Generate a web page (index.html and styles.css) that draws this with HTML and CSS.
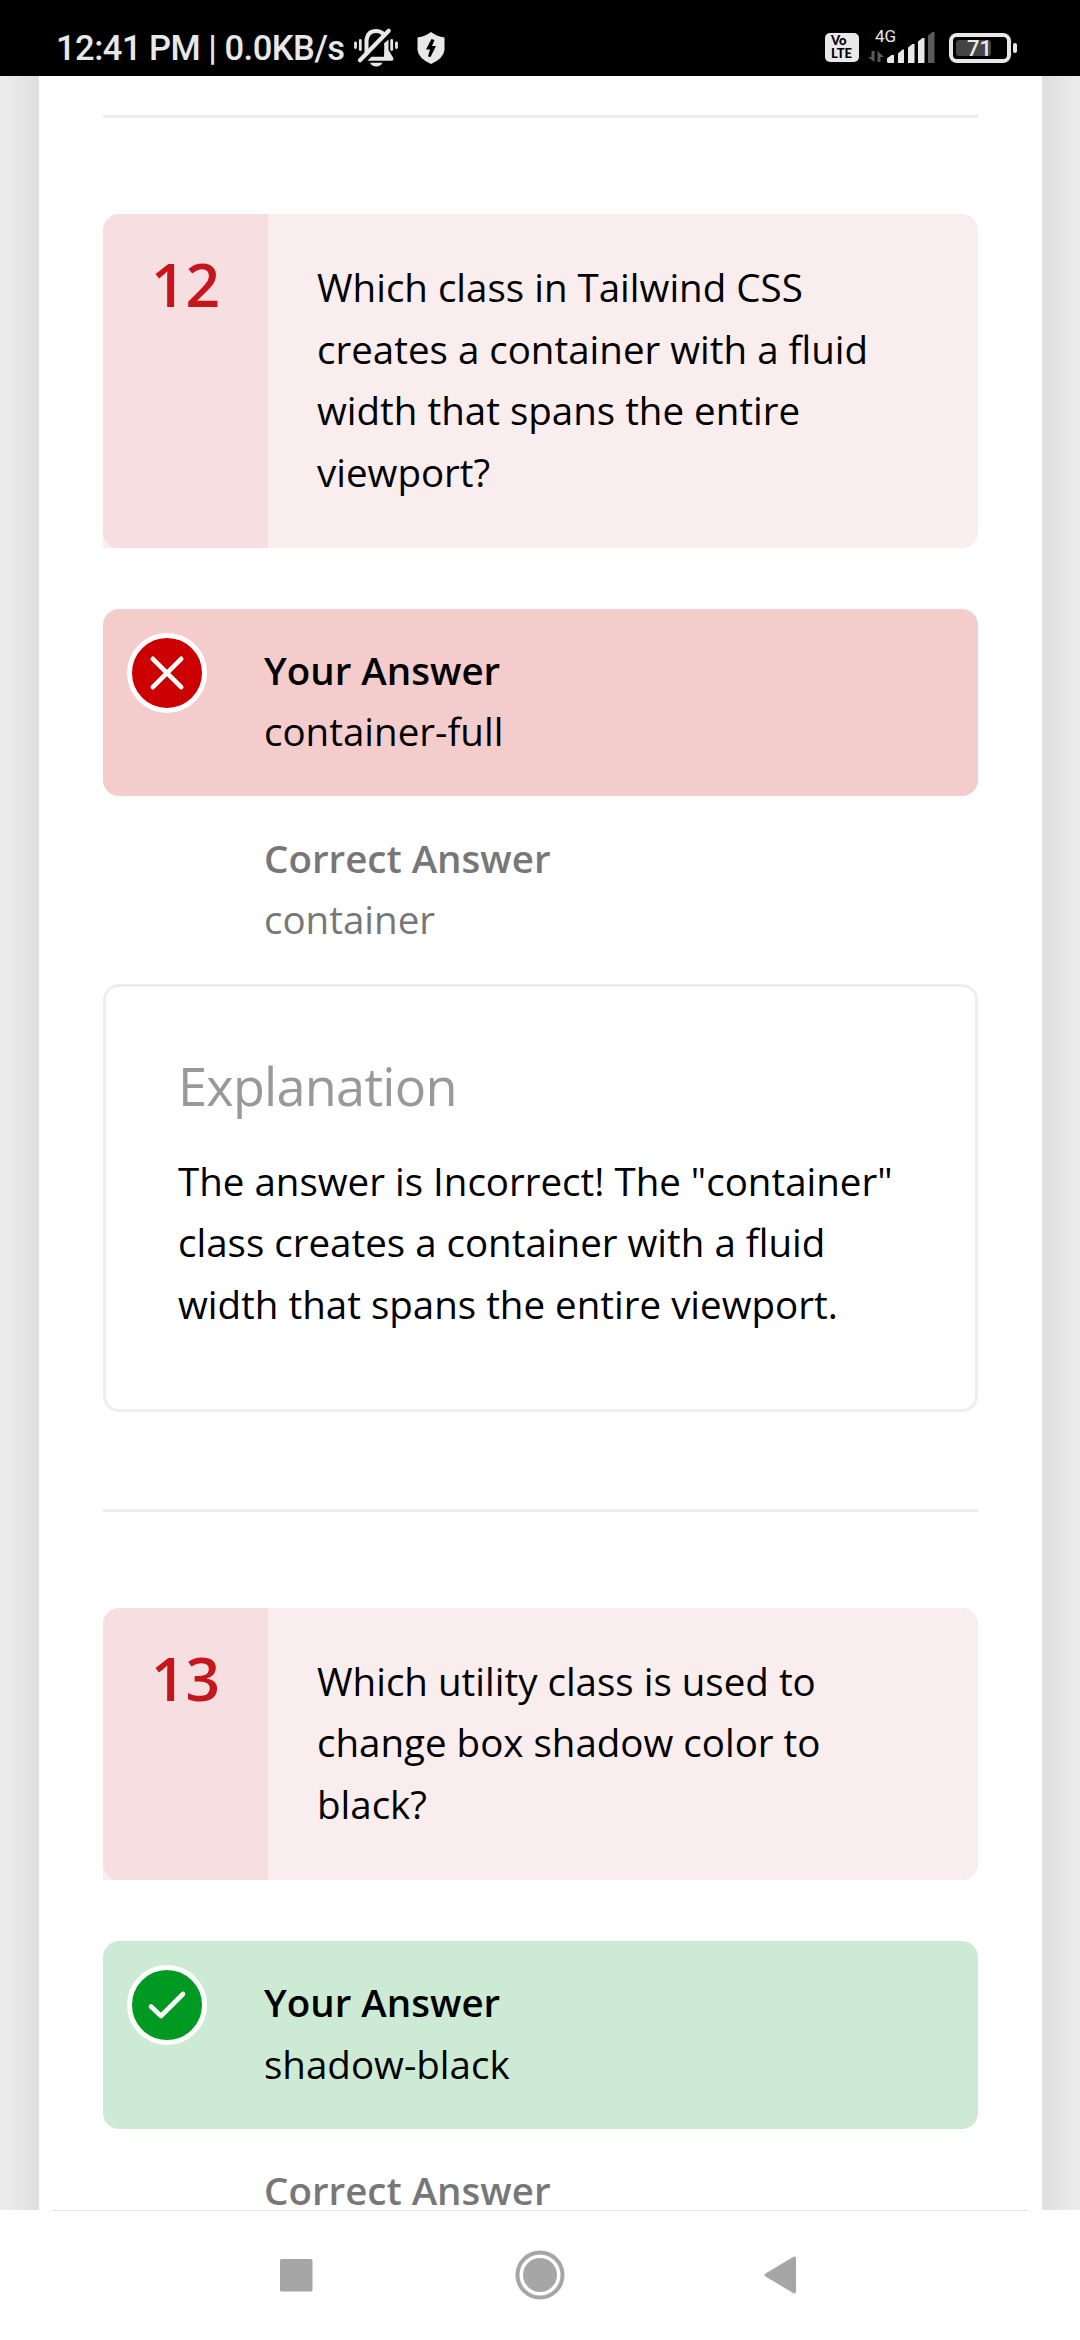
FILE: index.html
```html
<!DOCTYPE html>
<html lang="en">
<head>
<meta charset="utf-8">
<title>Quiz results</title>
<link rel="stylesheet" href="styles.css">
</head>
<body>
<header class="status">
  <span class="clock">12:41 PM | 0.0KB/s</span>
  <svg class="bell" width="46" height="42" viewBox="0 0 46 42" fill="none" stroke="#e8e8e8" stroke-width="4" stroke-linecap="butt">
    <path d="M13.500 27V13.500Q14.500 4 23 4Q27.500 4 30.500 7"/>
    <path d="M7 33.300L35.700 3.800" stroke-width="4.200" stroke-linecap="round"/>
    <path d="M14.500 33.700L18.500 29.700H31L31.300 19.500L31 16.500L35.500 12.500V23L40.300 31Q41 33.700 38.500 33.700Z" fill="#e8e8e8" stroke="none"/>
    <path d="M17 35.700H29.500Q27.500 39.500 23.300 39.500Q19 39.500 17 35.700Z" fill="#e8e8e8" stroke="none"/>
    <path d="M2.500 15.800V20.500M7.300 13.500V22.500M38.700 13.500V22.500M43.500 15.800V20.500" stroke-width="2.800" stroke-linecap="round"/>
  </svg>
  <svg class="shield" width="28" height="32" viewBox="0 0 28 32">
    <path d="M14 0Q20 4.500 27.500 5.500V18Q26.500 26.500 14 32Q1.500 26.500 .5 18V5.500Q8 4.500 14 0Z" fill="#e8e8e8"/>
    <path d="M14.500 7L9 17.500H13L11 24.500L13.500 25L19 14H15L17.500 8Z" fill="#000"/>
  </svg>
  <span class="spacer"></span>
  <span class="volte"><b>Vo</b><b>LTE</b></span>
  <span class="network">
    <span class="gen">4G</span>
    <svg width="68" height="33" viewBox="0 0 68 33">
      <path d="M6.500 20V31L0 26H3.500V20ZM9.500 31V20L16 26H12.500V31Z" fill="#5a5a5a"/>
      <g fill="#e8e8e8"><path d="M19 31V27.500L23.500 24H26V32H20ZM30 32V22.500L34.500 18.500H36V32ZM40 32V16.500L44.500 13H46.500V32ZM50 32V10.500L54.500 7H56.500V32Z"/></g>
      <path d="M60 32V4.500L64.500 1H66.500V32Z" fill="#5a5a5a"/>
    </svg>
  </span>
  <span class="battery"><span class="level">71</span></span>
  <span class="tip"></span>
</header>

<main class="viewport">
  <div class="sheet">
    <hr class="rule">
    <section class="item">
      <div class="question">
        <div class="number">12</div>
        <p class="prompt">Which class in Tailwind CSS<br>creates a container with a fluid<br>width that spans the entire<br>viewport?</p>
      </div>
      <div class="answer wrong">
        <svg class="mark" viewBox="0 0 80 80"><circle cx="40" cy="40" r="37.500"/><path d="M25.800 25.800L54.200 54.200M54.200 25.800L25.800 54.200"/></svg>
        <div><strong>Your Answer</strong><br>container-full</div>
      </div>
      <div class="answer expected">
        <div><strong>Correct Answer</strong><br>container</div>
      </div>
      <div class="explanation">
        <h3>Explanation</h3>
        <p>The answer is Incorrect! The "container"<br>class creates a container with a fluid<br>width that spans the entire viewport.</p>
      </div>
    </section>
    <hr class="rule">
    <section class="item">
      <div class="question">
        <div class="number">13</div>
        <p class="prompt">Which utility class is used to<br>change box shadow color to<br>black?</p>
      </div>
      <div class="answer right">
        <svg class="mark" viewBox="0 0 80 80"><circle cx="40" cy="40" r="37.500"/><path d="M24 41.500L34 51L56 29"/></svg>
        <div><strong>Your Answer</strong><br>shadow-black</div>
      </div>
      <div class="answer expected">
        <div><strong>Correct Answer</strong></div>
      </div>
    </section>
  </div>
</main>

<nav class="keys">
  <svg viewBox="0 0 50 50"><rect x="9" y="9" width="32.500" height="32.500" rx="1.500"/></svg>
  <svg viewBox="0 0 50 50"><circle cx="25" cy="25" r="22.500" fill="none" stroke="#a6a6a6" stroke-width="4"/><circle cx="25" cy="25" r="17"/></svg>
  <svg viewBox="0 0 50 50"><path d="M6.500 23.500L34.500 6.800Q37 5.800 37 8.500V41.500Q37 44.500 34.500 43.200L6.500 26.500Q4.500 25 6.500 23.500Z"/></svg>
</nav>
</body>
</html>
```

FILE: styles.css
```css
* { box-sizing: border-box; }

body {
  margin: 0;
  height: 2340px;
  display: flex;
  flex-direction: column;
  overflow: hidden;
  background: #fff;
  color: #000;
  font: 38.5px/61.6px "Open Sans", sans-serif;
}

p, h3 { margin: 0; font-weight: 400; }
strong { font-weight: 600; }

.status {
  flex: none;
  height: 76px;
  padding: 19px 63px 0 56px;
  display: flex;
  align-items: center;
  background: #000;
  color: #e8e8e8;
  font-family: Roboto, sans-serif;
}
.clock { width: 289px; font-size: 34.5px; font-weight: 500; line-height: 56px; letter-spacing: -.5px; white-space: nowrap; }
.bell { margin-left: 8px; }
.shield { margin-left: 18px; }
.spacer { flex: 1; }
.volte {
  width: 34px;
  height: 29px;
  padding: 1px 0 0 6px;
  border-radius: 5px;
  background: #e8e8e8;
  color: #000;
  font: 13px/13px Lato, sans-serif;
}
.volte b { display: block; height: 13px; font-weight: 900; }
.network { position: relative; width: 68px; margin-left: 9px; display: flex; }
.gen { position: absolute; left: 7px; top: -4px; font-size: 17px; line-height: 18px; }
.battery {
  width: 62px;
  height: 30px;
  margin-left: 13px;
  padding: 3px;
  border: 4px solid #e8e8e8;
  border-radius: 8px;
}
.level {
  display: block;
  width: 35px;
  height: 16px;
  padding-left: 11px;
  border-radius: 3px;
  background: #444;
  font-size: 22px;
  font-weight: 500;
  line-height: 18px;
}
.tip { width: 4px; height: 10px; margin-left: 2px; border-radius: 2px; background: #e8e8e8; }

.viewport { flex: 1; min-height: 0; overflow: hidden; background: #eee; }
.sheet {
  width: 1003px;
  height: 2400px;
  margin-left: 39px;
  margin-top: -100px;
  padding: 139px 64px 0;
  background: #fff;
  box-shadow: 0 0 55px rgba(0, 0, 0, .13);
}
.rule { height: 3px; margin: 0; border: 0; background: #ededed; }
.item { padding-top: 96px; }
.item + .rule { margin-top: 97px; }

.question {
  display: flex;
  background: #faedee;
  border-radius: 16px 16px 16px 0;
}
.number {
  width: 165px;
  padding-top: 39px;
  border-radius: 16px 0 0 16px;
  background: #f6dee1;
  color: #c4161c;
  font-size: 60.5px;
  font-weight: 600;
  text-align: center;
}
.prompt { padding: 43px 0 44.5px 49px; }

.answer {
  display: flex;
  min-height: 187px;
  padding: 31px 24px 32px 161px;
  border-radius: 16px;
}
.wrong { margin-top: 61px; background: #f4cccc; }
.right { min-height: 188px; margin-top: 61px; background: #cdebd4; }
.expected { margin-top: 1px; color: #777; }
.right + .expected { margin-top: 0; }
.mark { flex: none; width: 80px; height: 80px; margin: -7px 57px 0 -137px; stroke: #fff; stroke-width: 5; }
.mark path { fill: none; stroke-width: 4.6; stroke-linecap: round; stroke-linejoin: round; }
.wrong .mark { fill: #c00; }
.right .mark { fill: #092; }

.explanation {
  height: 428px;
  padding: 68px 72px 0;
  border: 3px solid #eee;
  border-radius: 16px;
  white-space: nowrap;
}
.explanation h3 { color: #999; font-size: 52.25px; line-height: 62px; letter-spacing: -.75px; }
.explanation p { margin-top: 34px; }

.keys {
  flex: none;
  height: 130px;
  padding: 40px 52px 0;
  display: flex;
  justify-content: center;
  gap: 194px;
  background: linear-gradient(#e4e4e4, #e4e4e4) center top / 976px 1px no-repeat #fff;
}
.keys svg { width: 50px; height: 50px; fill: #a6a6a6; }
```
